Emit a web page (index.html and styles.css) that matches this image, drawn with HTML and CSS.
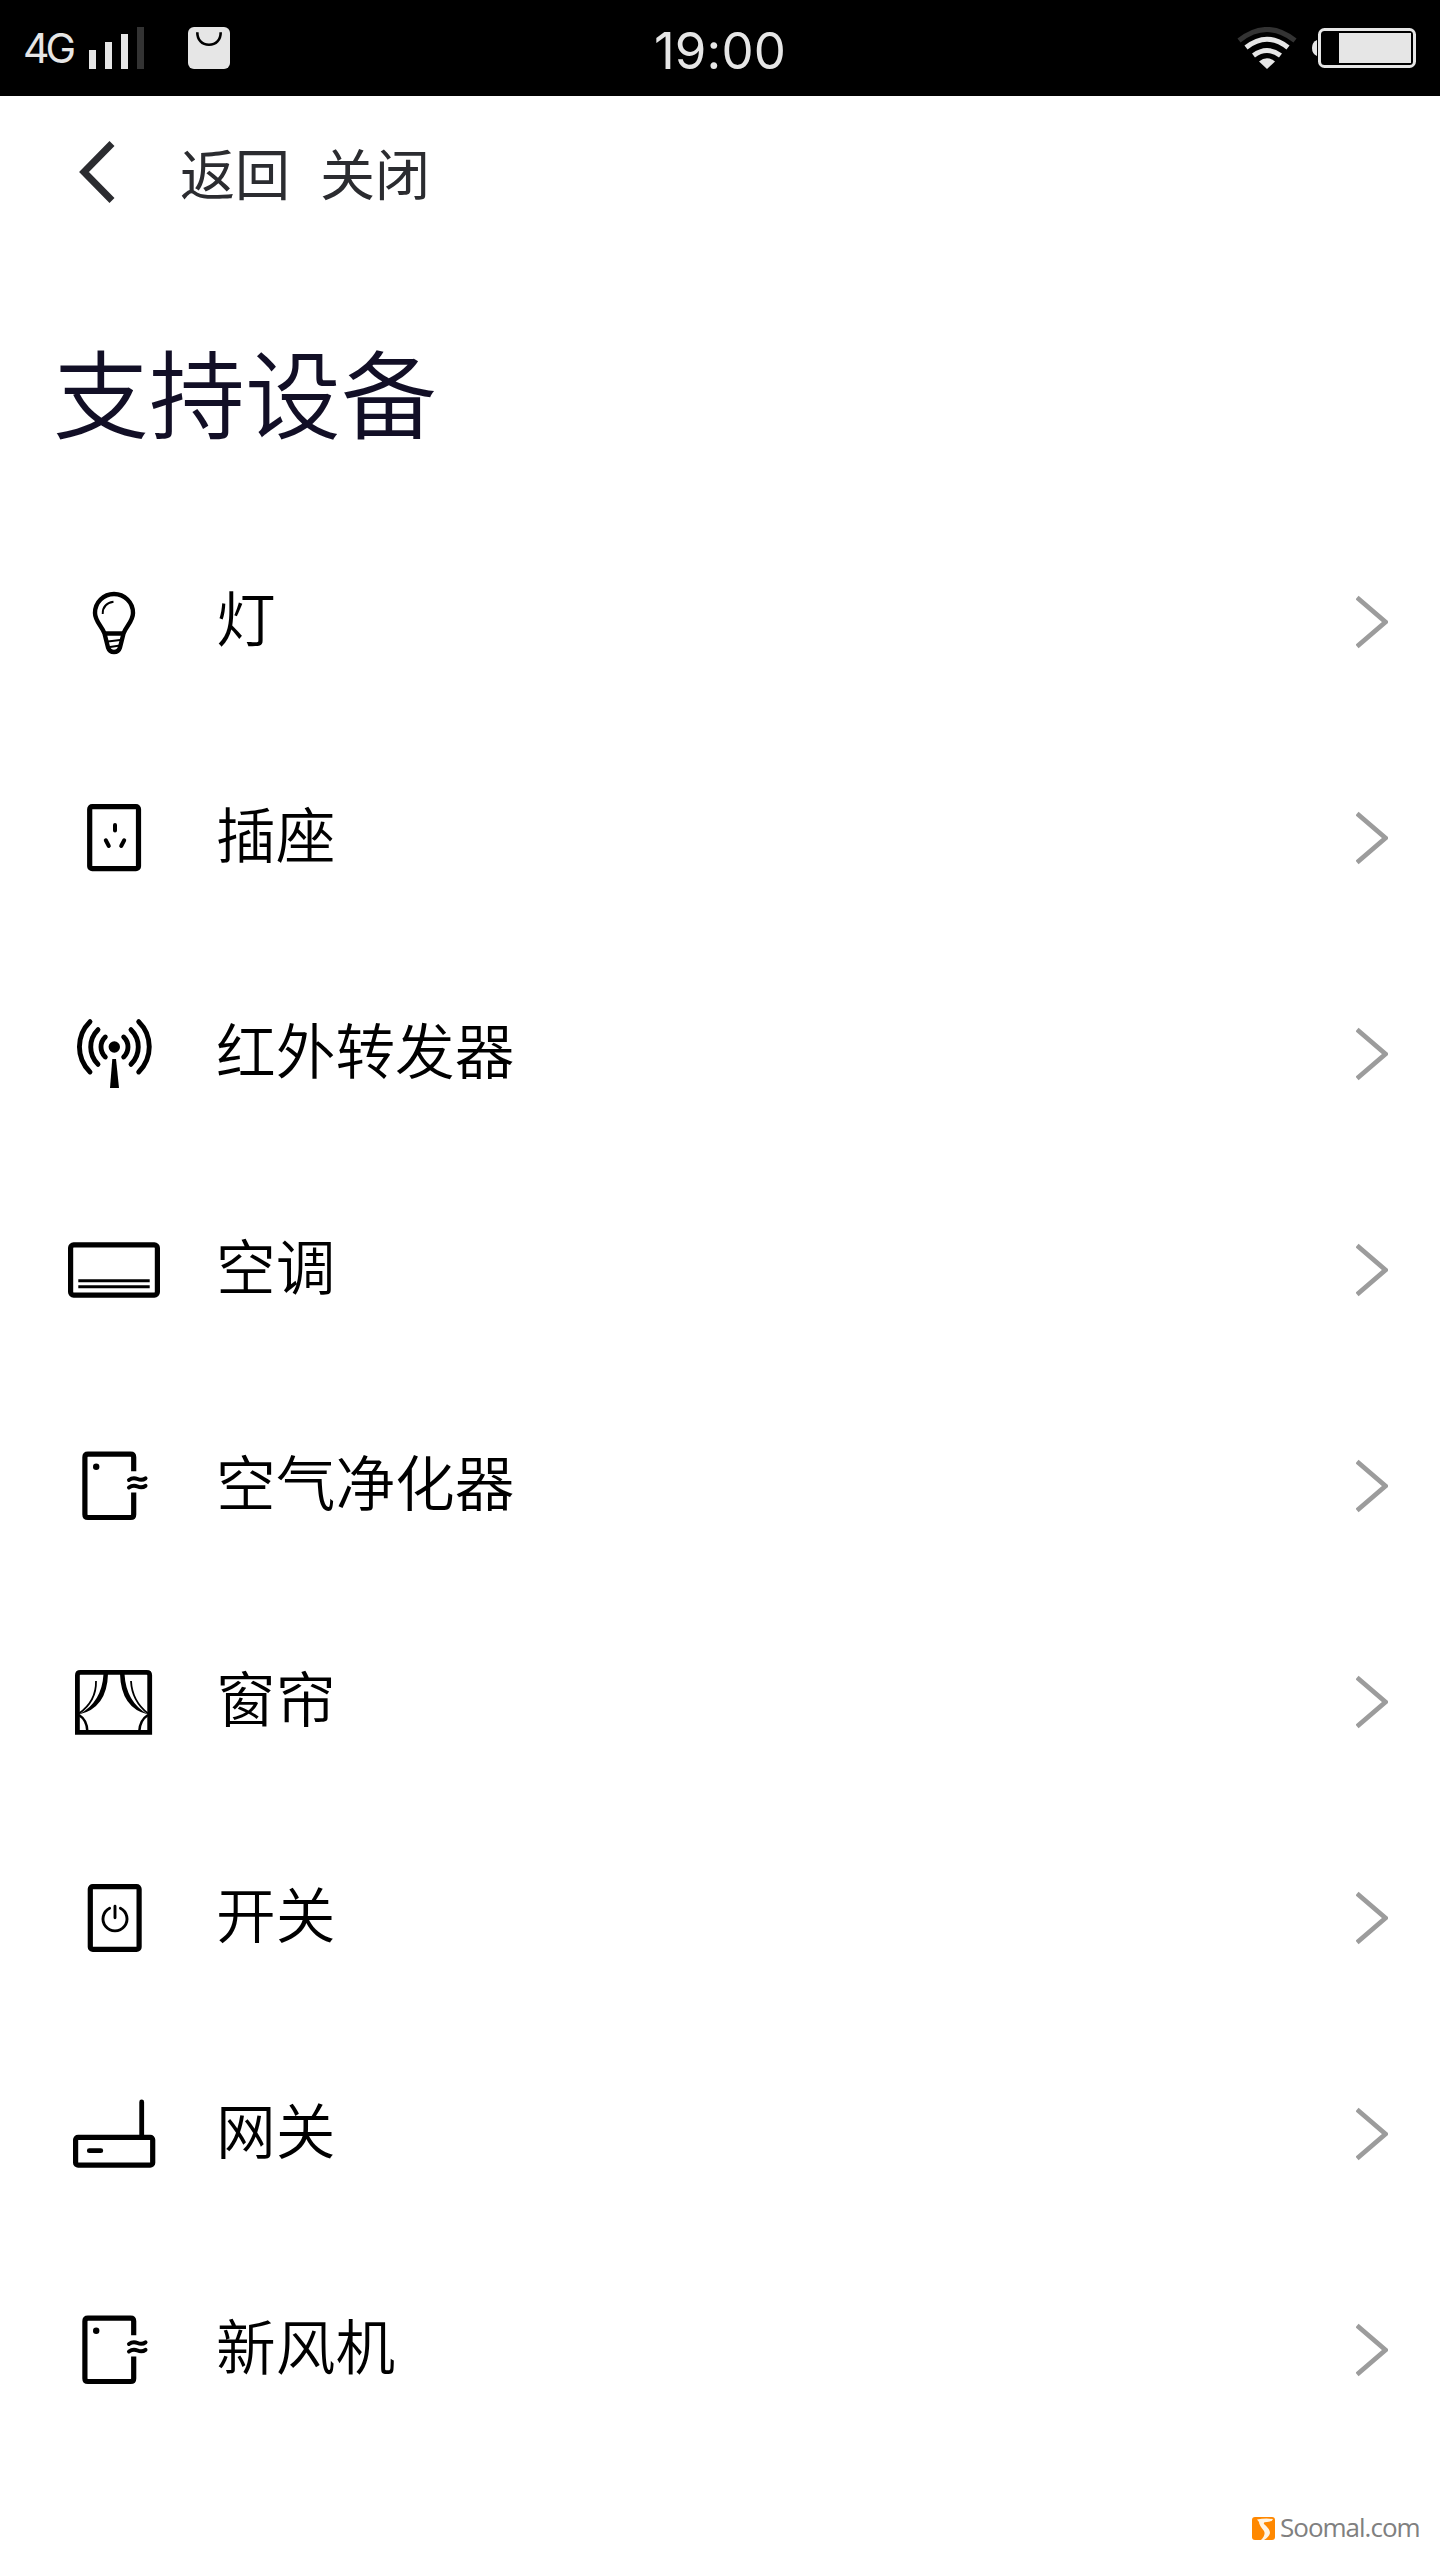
FILE: index.html
```html
<!DOCTYPE html>
<html lang="zh-CN">
<head>
<meta charset="utf-8">
<title>支持设备</title>
<link rel="stylesheet" href="styles.css">
</head>
<body>
<div class="status">
  <div class="status-left">
    <span class="network">4G</span>
    <svg class="signal" width="55" height="42" viewBox="0 0 55 42"><path fill="#e6e6e6" d="M0 23h7v19H0zM16 15h7v27h-7zM32 7h7v35h-7z"/><path fill="#333" d="M48 0h7v42h-7z"/></svg>
    <svg class="bag" width="42" height="42" viewBox="0 0 42 42"><rect width="42" height="42" rx="6" fill="#e6e6e6"/><path d="M9.300 5.200C9.300 13 14 17.700 21 17.700S32.700 13 32.700 5.200" fill="none" stroke="#000" stroke-width="2.600"/></svg>
  </div>
  <span class="clock">19:00</span>
  <div class="status-right">
    <svg width="60" height="42" viewBox="0 0 60 42"><g fill="none" stroke="#e6e6e6" stroke-width="5"><path stroke="#333" d="M2 13.500Q30 -8.500 58 13.500"/><path d="M9 20.500Q30 4 51 20.500"/><path d="M16.500 28.500Q30 18.500 43.500 28.500"/></g><path fill="#e6e6e6" d="M22 34.500Q30 28 38 34.500L30 42z"/></svg>
    <svg width="104" height="40" viewBox="0 0 104 40"><path fill="#e6e6e6" d="M5 12v16Q0 26 0 20T5 12z"/><rect x="7.500" y="1.500" width="95" height="37" rx="5" fill="none" stroke="#e6e6e6" stroke-width="3"/><rect x="27" y="5" width="72" height="30" fill="#e6e6e6"/></svg>
  </div>
</div>
<nav class="nav">
  <svg class="back" width="40" height="64" viewBox="0 0 40 64"><path d="M36 3.500 8 32l28 28.500" fill="none" stroke="#2b2c30" stroke-width="7"/></svg>
  <span class="nav-item">返回</span>
  <span class="nav-item">关闭</span>
</nav>
<h1 class="title">支持设备</h1>
<ul class="devices">
  <li class="device">
    <svg class="icon" viewBox="0 0 100 100"><path d="M40.500 61.500C38 54 31 49.500 31 41a19 19 0 0 1 38 0C69 49.500 62 54 59.500 61.500L56 75.500Q54.500 80 50 80T44 75.500z" stroke-width="4.400"/><path d="M41 61.500h18" stroke-width="4.500"/><path d="M38.700 42Q38.500 31.500 49.500 29.800M44 69.500l14-1.800M46 75l10-1.500" stroke-width="1.900"/></svg>
    <span class="name">灯</span>
    <svg class="arrow" viewBox="0 0 32 54"><path d="M1 2.500 29.500 27 1 51.500"/></svg>
  </li>
  <li class="device">
    <svg class="icon" viewBox="0 0 100 100"><rect x="25.700" y="18.700" width="48.800" height="62" rx="2.500" stroke-width="5.200"/><path d="M51 37v5.500M41.800 52.300l3 5.700M60.200 52.300l-3 5.700" stroke-width="4" stroke-linecap="round"/></svg>
    <span class="name">插座</span>
    <svg class="arrow" viewBox="0 0 32 54"><path d="M1 2.500 29.500 27 1 51.500"/></svg>
  </li>
  <li class="device">
    <svg class="icon" viewBox="0 0 100 100"><circle cx="50.300" cy="43" r="5.700" class="solid"/><path class="solid" d="M48.300 55h3.700L55 84h-9z"/><path stroke-width="4.900" stroke-linecap="round" d="M26 17.700a35.200 35.200 0 0 0 0 50.300M34 25.700a24.200 24.200 0 0 0 0 34.600M41.300 33a13.800 13.800 0 0 0 0 20M74.700 17.700a35.200 35.200 0 0 1 0 50.300M67 25.700a24.200 24.200 0 0 1 0 34.600M59.700 33a13.800 13.800 0 0 1 0 20"/></svg>
    <span class="name">红外转发器</span>
    <svg class="arrow" viewBox="0 0 32 54"><path d="M1 2.500 29.500 27 1 51.500"/></svg>
  </li>
  <li class="device">
    <svg class="icon" viewBox="0 0 100 100"><rect x="6.600" y="24.900" width="86.800" height="50.200" rx="3" stroke-width="5.200"/><path d="M14.300 60.700h71.400M14.300 66.700h71.400" stroke-width="3"/></svg>
    <span class="name">空调</span>
    <svg class="arrow" viewBox="0 0 32 54"><path d="M1 2.500 29.500 27 1 51.500"/></svg>
  </li>
  <li class="device">
    <svg class="icon" viewBox="0 0 100 100"><path d="M69.700 35.300V21.200q0-3-3-3H23.900q-3 0-3 3v57.300q0 3 3 3h42.800q3 0 3-3V56.500" stroke-width="5.200"/><circle cx="32.200" cy="30.700" r="3.200" class="solid"/><path d="M65 44q4-3 8.500-1t8-.700M65 51.500q4-3 8.500-1t8-.700" stroke-width="4" stroke-linecap="round"/></svg>
    <span class="name">空气净化器</span>
    <svg class="arrow" viewBox="0 0 32 54"><path d="M1 2.500 29.500 27 1 51.500"/></svg>
  </li>
  <li class="device">
    <svg class="icon" viewBox="0 0 100 100"><path d="M13.400 80.300V23.300q0-3 3-3h66.300q3 0 3 3v57z" stroke-width="4.800"/><path class="solid" d="M39.500 22h4.500Q43 56 15 62.500 38 50 39.500 22zM60.500 22H56Q57 56 84 62.500 62 50 60.500 22z"/><path d="M32 29Q32.500 49 15 61.500M67 29Q68 49 84 61.500" stroke-width="1.800"/><path d="M15 63q8 5 8.300 16M84 63q-8 5-8.700 16" stroke-width="2.500"/></svg>
    <span class="name">窗帘</span>
    <svg class="arrow" viewBox="0 0 32 54"><path d="M1 2.500 29.500 27 1 51.500"/></svg>
  </li>
  <li class="device">
    <svg class="icon" viewBox="0 0 100 100"><rect x="26.300" y="18.600" width="48.800" height="62.800" rx="2.500" stroke-width="5.200"/><path d="M45.600 40.200a12 12 0 1 0 10.800 0M51 38.300v11.500" stroke-width="2.900" stroke-linecap="round"/></svg>
    <span class="name">开关</span>
    <svg class="arrow" viewBox="0 0 32 54"><path d="M1 2.500 29.500 27 1 51.500"/></svg>
  </li>
  <li class="device">
    <svg class="icon" viewBox="0 0 100 100"><rect x="11.600" y="53.300" width="77.100" height="27.900" rx="2.500" stroke-width="5.200"/><path d="M77.700 18v35M25.300 66.700h11.500" stroke-width="4.800" stroke-linecap="round"/></svg>
    <span class="name">网关</span>
    <svg class="arrow" viewBox="0 0 32 54"><path d="M1 2.500 29.500 27 1 51.500"/></svg>
  </li>
  <li class="device">
    <svg class="icon" viewBox="0 0 100 100"><path d="M69.700 35.300V21.200q0-3-3-3H23.900q-3 0-3 3v57.300q0 3 3 3h42.800q3 0 3-3V56.500" stroke-width="5.200"/><circle cx="32.200" cy="30.700" r="3.200" class="solid"/><path d="M65 44q4-3 8.500-1t8-.700M65 51.500q4-3 8.500-1t8-.700" stroke-width="4" stroke-linecap="round"/></svg>
    <span class="name">新风机</span>
    <svg class="arrow" viewBox="0 0 32 54"><path d="M1 2.500 29.500 27 1 51.500"/></svg>
  </li>
</ul>
<footer class="credit">
  <svg width="23" height="23" viewBox="0 0 23 23"><rect width="23" height="23" rx="3" fill="#f80"/><path d="M5 2.500Q13 1 21 2q-1 3-6 3-4 0-3 2 6 5 6 9-1 4-6 7H9q5-5 3-9Q7 8 7 5z" fill="#fff4e4"/></svg>
  <span class="site">Soomal.com</span>
</footer>
</body>
</html>
```
FILE: styles.css
```css
* { box-sizing: border-box; }
body {
  margin: 0;
  width: 1440px;
  height: 2560px;
  overflow: hidden;
  background: #fff;
  color: #000;
  font-family: "Noto Sans CJK SC", sans-serif;
  display: flex;
  flex-direction: column;
}
svg { display: block; flex: none; }
.status {
  height: 96px;
  flex: none;
  background: #000;
  color: #e6e6e6;
  font-family: Inter, Roboto, sans-serif;
  display: grid;
  grid-template-columns: 1fr auto 1fr;
  align-items: center;
  padding: 0 24px;
}
.status-left, .status-right { display: flex; align-items: center; }
.network { font-size: 41px; font-weight: 400; letter-spacing: -4px; width: 66px; margin-left: -1px; line-height: 50px; }
.bag { margin-left: 44px; }
.clock { font-size: 51px; letter-spacing: 0.1px; line-height: 60px; padding-top: 5px; }
.status-right { justify-content: flex-end; gap: 15px; }
.nav {
  height: 158px;
  flex: none;
  display: flex;
  align-items: center;
  padding-left: 76px;
  color: #2b2c30;
}
.back { margin-right: 64px; margin-top: -6px; }
.nav-item { font-size: 55px; line-height: 80px; font-weight: 400; margin: -8px 30px 0 0; }
.title {
  margin: 0;
  height: 260px;
  flex: none;
  padding: 66px 0 0 53px;
  font-size: 96px;
  line-height: 140px;
  font-weight: 350;
  color: #120f26;
}
.devices { margin: 0; padding: 0; list-style: none; flex: none; }
.device {
  height: 216px;
  display: flex;
  align-items: center;
  padding: 0 52px 0 64px;
}
.icon { width: 100px; height: 100px; fill: none; stroke: #000; }
.icon .solid { fill: #000; stroke: none; }
.name { flex: 1; margin: -12px 0 0 52px; font-size: 59.7px; line-height: 90px; font-weight: 350; }
.arrow { width: 32px; height: 54px; fill: none; stroke: #9c9c9c; stroke-width: 4.8; }
.credit {
  margin: 50px 0 0 1252px;
  height: 40px;
  display: flex;
  align-items: center;
  gap: 5px;
  color: #808080;
}
.site { font-family: "Open Sans", sans-serif; font-size: 26px; line-height: 38px; letter-spacing: -1px; padding-bottom: 2px; }
```
